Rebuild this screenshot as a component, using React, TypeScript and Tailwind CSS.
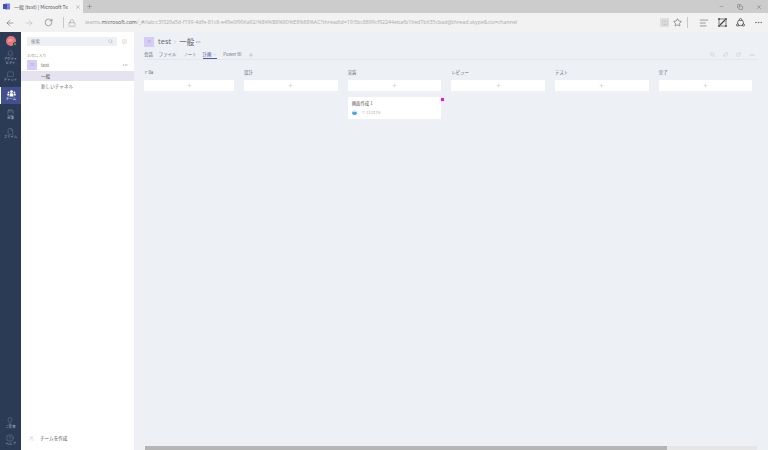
import { ArrowLeft, ArrowRight, RotateCw, Lock, Plus, X, Minus, Copy, Star, BookOpen, AlignLeft, MoreHorizontal, Search, Bell, MessageSquare, Calendar, File, Lightbulb, CircleHelp, SquarePen, ExternalLink, RefreshCw, ChevronDown, ChevronRight, MessagesSquare, Users } from "lucide-react";

// filled people glyph for the active Teams entry
const TeamGlyph = () => (
  <svg width="9" height="7" viewBox="0 0 9 7" className="shrink-0" fill="currentColor">
    <circle cx="4.5" cy="1.6" r="1.4" />
    <circle cx="1.6" cy="2.3" r="0.9" />
    <circle cx="7.4" cy="2.3" r="0.9" />
    <path d="M2.6 6.5V4.6c0-.8.6-1.3 1.2-1.3h1.4c.6 0 1.2.5 1.2 1.3v1.9z" />
    <path d="M0.3 5.5V4.5c0-.6.4-1 1-1h.7v2z" />
    <path d="M8.7 5.5V4.5c0-.6-.4-1-1-1H7v2z" />
  </svg>
);

const WebNote = () => (
  <svg width="9" height="9" viewBox="0 0 9 9" fill="none" stroke="currentColor" className="ml-[9px] shrink-0">
    <rect x="1" y="1" width="7" height="7" strokeWidth="0.7" />
    <path d="M2 7 7 2" strokeWidth="1.3" />
    <rect x="0.2" y="0.2" width="1.6" height="1.6" fill="currentColor" strokeWidth="0" />
    <rect x="7.2" y="0.2" width="1.6" height="1.6" fill="currentColor" strokeWidth="0" />
    <rect x="0.2" y="7.2" width="1.6" height="1.6" fill="currentColor" strokeWidth="0" />
    <rect x="7.2" y="7.2" width="1.6" height="1.6" fill="currentColor" strokeWidth="0" />
  </svg>
);

const ShareRing = () => (
  <svg width="9" height="9" viewBox="0 0 9 9" fill="none" stroke="currentColor" strokeWidth="0.8" className="ml-[9px] shrink-0">
    <circle cx="4.5" cy="4.8" r="3" />
    <circle cx="4.5" cy="1.6" r="1.1" fill="#f2f2f2" />
    <circle cx="1.6" cy="7" r="1.1" fill="#f2f2f2" />
    <circle cx="7.4" cy="7" r="1.1" fill="#f2f2f2" />
  </svg>
);

const railItems = [
  { icon: Bell, label: "アクティビティ", wrap: true },
  { icon: MessageSquare, label: "チャット" },
  { icon: TeamGlyph, label: "チーム", active: true },
  { icon: Calendar, label: "会議" },
  { icon: File, label: "ファイル" },
];

const columns = ["ｒ0a", "設計", "実装", "レビュー", "テスト", "完了"];

const App = () => {
  return (
    <div className="w-[768px] h-[450px] overflow-hidden flex flex-col bg-white font-['Noto_Sans_CJK_JP','Noto_Sans',sans-serif] text-[#555]">
      {/* Tab strip */}
      <div className="h-[13px] shrink-0 flex bg-[#cccccc]">
        <div className="w-[83px] bg-[#f2f2f2] flex items-center pl-[3px] text-[4.9px] text-[#555]">
          <svg width="7" height="7" viewBox="0 0 7 7" className="shrink-0">
            <rect x="2" y="0.5" width="5" height="6" fill="#7b83eb" />
            <rect x="0" y="1" width="4" height="5" fill="#464eb8" />
          </svg>
          <span className="ml-[4px] whitespace-nowrap w-[58px]">一般 (test) | Microsoft Te</span>
          <X size={6} strokeWidth={1.2} className="ml-[3px] text-[#666]" />
        </div>
        <div className="ml-[3px] mr-auto flex items-center">
          <Plus size={7} strokeWidth={1.2} className="text-[#555]" />
        </div>
        <div className="flex items-center gap-[13px] pr-[6px] text-[#555]">
          <Minus size={5} strokeWidth={1.5} />
          <Copy size={6} strokeWidth={1.6} />
          <X size={6} strokeWidth={1.5} />
        </div>
      </div>

      {/* Address bar */}
      <div className="h-[19px] shrink-0 flex items-center bg-[#f2f2f2] text-[#444]">
        <ArrowLeft size={10} strokeWidth={1.1} className="ml-[5px]" />
        <ArrowRight size={10} strokeWidth={1.1} className="ml-[9px] text-[#aaa]" />
        <RotateCw size={9} strokeWidth={1.2} className="ml-[10px]" />
        <div className="w-px h-[11px] bg-[#c8c8c8] ml-[10px]" />
        <Lock size={8} strokeWidth={1.1} className="ml-[4px] text-[#777]" />
        <div className="ml-[9px] w-[426px] whitespace-nowrap text-[5.25px] text-[#aaa] font-['Open_Sans',sans-serif]">
          teams.<span className="text-[#555]">microsoft.com</span>/_#/tab:c3f329a5d-f199-4dfe-81c8-e45e0f906a92/%E4%B8%80%E8%88%AC?threadId=19:5bc8899cf92244ebafb16ed7b635cbad@thread.skype&amp;ctx=channel
        </div>
        <div className="ml-auto flex items-center">
          <div className="w-[9px] h-[9px] bg-[#dedede] flex items-center justify-center">
            <BookOpen size={6} strokeWidth={1.1} className="text-[#aaa]" />
          </div>
          <Star size={9} strokeWidth={1.4} className="ml-[4px]" />
          <div className="w-px h-[11px] bg-[#c8c8c8] ml-[5px]" />
          <AlignLeft size={10} strokeWidth={1.2} className="ml-[11px]" />
          <WebNote />
          <ShareRing />
          <MoreHorizontal size={9} strokeWidth={1.3} className="ml-[9px] mr-[5px]" />
        </div>
      </div>

      <div className="flex-1 flex min-h-0">
        {/* App rail */}
        <div className="w-[21px] shrink-0 bg-[#2b3a55] flex flex-col items-center text-[#aeb6c6]">
          <div className="relative w-[10px] h-[10px] mt-[4px] mb-[3px] rounded-full bg-[#e8747c] shrink-0 flex items-center justify-center text-[3px] text-[#f7c9cc]">
            KM
            <span className="absolute right-[-1px] bottom-0 w-[4px] h-[4px] rounded-full bg-[#5fb84e] border-[0.5px] border-[#2b3a55]" />
          </div>
          {railItems.map((item) => (
            <div
              key={item.label}
              className={`w-full h-[17px] mb-[2px] flex flex-col items-center justify-center text-[3.4px] leading-[4px] ${item.active ? "bg-[#444f8e] border-l border-white text-white" : ""}`}
            >
              <item.icon size={7} strokeWidth={0.9} className="shrink-0" />
              <span className={`text-center ${item.wrap ? "w-[16px] break-all" : ""}`}>{item.label}</span>
            </div>
          ))}
          <div className="mt-auto flex flex-col items-center gap-[5px] pb-[4px] text-[3.4px] leading-[4px]">
            <div className="flex flex-col items-center">
              <Lightbulb size={8} strokeWidth={0.9} />
              <span>ご提案</span>
            </div>
            <div className="flex flex-col items-center">
              <CircleHelp size={8} strokeWidth={0.9} />
              <span>ヘルプ</span>
            </div>
          </div>
        </div>

        {/* Team list */}
        <div className="w-[113px] shrink-0 bg-white flex flex-col">
          <div className="flex items-center mt-[5px] ml-[6px]">
            <div className="w-[90px] h-[9px] bg-[#edf0f5] flex items-center justify-between px-[4px] text-[4.4px] text-[#888]">
              <span>検索</span>
              <Search size={5} strokeWidth={1.2} />
            </div>
            <SquarePen size={5} strokeWidth={1.1} className="ml-[5px] text-[#888]" />
          </div>
          <div className="ml-[6px] mt-[6px] text-[3.9px] leading-[6px] text-[#999]">お気に入り</div>
          <div className="flex items-center h-[12px] mt-[1px] pl-[6px] pr-[6px]">
            <div className="w-[10px] h-[10px] bg-[#d5cdf6] flex items-center justify-center text-[3.5px] text-[#a99ce0]">TE</div>
            <span className="ml-[4px] text-[4.6px] text-[#666]">test</span>
            <MoreHorizontal size={6} strokeWidth={1} className="ml-auto text-[#666]" />
          </div>
          <div className="h-[10px] pl-[20px] flex items-center bg-[#e6e3f0] text-[4.6px] text-[#444]">一般</div>
          <div className="h-[10px] pl-[20px] flex items-center text-[4.6px] text-[#666]">新しいチャネル</div>
          <div className="mt-auto mb-[8px] ml-[8px] flex items-center text-[4.6px] text-[#555]">
            <Users size={5} strokeWidth={1} className="text-[#999]" />
            <span className="ml-[6px]">チームを作成</span>
          </div>
        </div>

        {/* Channel view */}
        <div className="flex-1 min-w-0 bg-[#edf0f5] flex flex-col">
          <div className="flex items-center mt-[5px] ml-[10px] h-[10px]">
            <div className="w-[10px] h-[10px] bg-[#d5cdf6] flex items-center justify-center text-[3.5px] text-[#a99ce0]">TE</div>
            <span className="ml-[4px] text-[7.5px] text-[#666] font-['Open_Sans',sans-serif]">test</span>
            <ChevronRight size={6} strokeWidth={0.9} className="ml-[1px] text-[#888]" />
            <span className="ml-[1px] text-[7.5px] text-[#555]">一般</span>
            <MoreHorizontal size={6} strokeWidth={1} className="ml-[1px] text-[#555]" />
          </div>

          {/* Tabs */}
          <div className="flex items-center h-[12px] mt-[1px] pt-[2px] ml-[10px] mr-[10px] border-b border-[#e4e7ed] text-[4.4px] text-[#666] leading-[7px]">
            <span>会話</span>
            <span className="ml-[6px]">ファイル</span>
            <span className="ml-[7px]">ノート</span>
            <span className="ml-[6px] flex items-center h-[9px] border-b border-[#5558af] text-[#4a4f9e]">
              計画
              <ChevronDown size={5} strokeWidth={0.9} className="ml-[1px]" />
            </span>
            <span className="ml-[6px] text-[#777]">Power BI</span>
            <Plus size={6} strokeWidth={0.9} className="ml-[7px]" />
            <div className="ml-auto flex items-center gap-[8px] pr-[3px] text-[#aaa]">
              <MessagesSquare size={5} strokeWidth={1.1} />
              <RefreshCw size={5} strokeWidth={1.1} />
              <ExternalLink size={5} strokeWidth={1.1} />
              <MoreHorizontal size={6} strokeWidth={1.1} />
            </div>
          </div>

          {/* Board */}
          <div className="flex gap-[10px] ml-[10px] mt-[10px]">
            {columns.map((name, i) => (
              <div key={name} className={i === 0 ? "w-[90px]" : "w-[93.7px]"}>
                <div className="h-[10px] text-[4.4px] leading-[5px] text-[#666]">{name}</div>
                <div className="h-[11px] bg-white flex items-center justify-center">
                  <Plus size={5} strokeWidth={0.9} className="text-[#6264a7]" />
                </div>
                {name === "実装" && (
                  <div className="relative h-[22px] mt-[6px] bg-white px-[4px] pt-[3px]">
                    <span className="absolute right-[-3px] top-[1px] w-[3px] h-[3px] bg-[#ff00ff]" />
                    <div className="text-[4.4px] leading-[7px] text-[#555]">画面作成 1</div>
                    <div className="flex items-center mt-[3px] text-[3.6px] text-[#aaa]">
                      <span className="w-[5px] h-[5px] rounded-full bg-[#4aa3e0] border-t-2 border-t-[#cfe6f7]" />
                      <Calendar size={3.5} strokeWidth={0.9} className="ml-[5px]" />
                      <span className="ml-[1px]">11/31TH</span>
                    </div>
                  </div>
                )}
              </div>
            ))}
          </div>

          {/* Horizontal scrollbar */}
          <div className="mt-auto ml-[11px] mr-[11px] h-[4px] bg-[#e6e6e6]">
            <div className="w-[522px] h-full bg-[#b5b5b5]" />
          </div>
        </div>
      </div>
    </div>
  );
};

export default App;
